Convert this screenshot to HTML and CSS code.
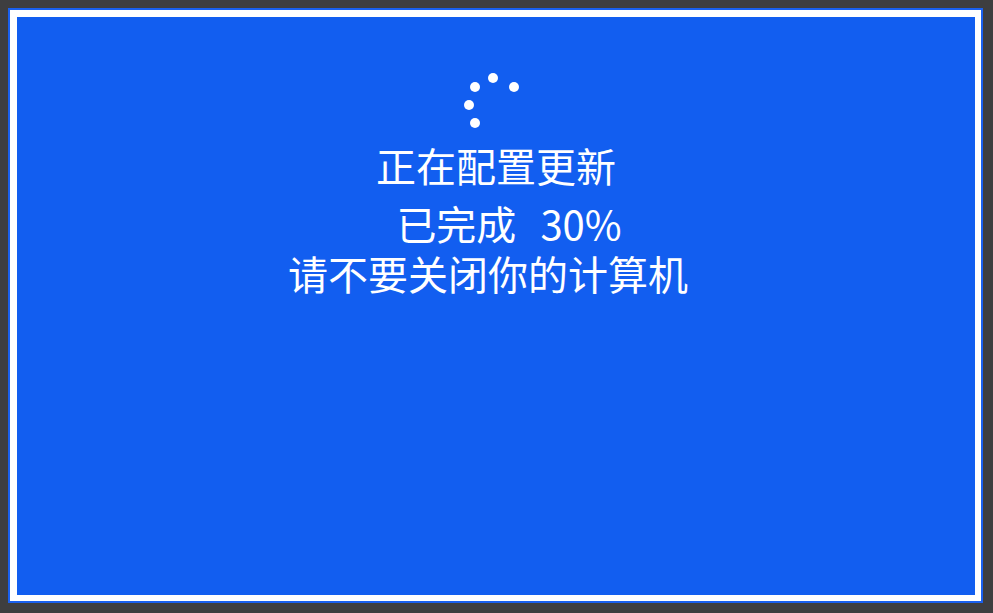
FILE: index.html
```html
<!DOCTYPE html>
<html lang="zh-CN">
  <head>
    <meta charset="UTF-8" />
    <meta name="viewport" content="width=device-width, initial-scale=1.0" />
    <title>正在配置更新</title>
    <link rel="stylesheet" href="styles.css">
  </head>
  <body>
    <div class="screen">
      <div class="panel">
        <!-- Loading dots -->
        <svg class="spinner" width="70" height="70" viewBox="0 0 70 70">
          <circle cx="32" cy="11" r="5" />
          <circle cx="53" cy="20" r="5" />
          <circle cx="14" cy="20" r="5" />
          <circle cx="8" cy="38" r="5" />
          <circle cx="14" cy="56" r="5" />
        </svg>

        <div class="message">
          <p class="title">正在配置更新</p>
          <p class="progress"><span>已完成</span><span class="percent">30%</span></p>
          <p class="warning">请不要关闭你的计算机</p>
        </div>
      </div>
    </div>
  </body>
</html>
```

FILE: styles.css
```css
html,
body {
  height: 100%;
}

body {
  margin: 0;
  padding: 8px 10px 10px 8px;
  box-sizing: border-box;
  background-color: #3e3e40;
  font-family: "Noto Sans CJK SC", "Noto Sans", sans-serif;
}

.screen {
  height: 100%;
  box-sizing: border-box;
  display: flex;
  border: 2px solid #1a60ee;
  padding: 7px 6px 6px 7px;
  background-color: #ffffff;
}

.panel {
  flex: 1;
  display: flex;
  flex-direction: column;
  align-items: center;
  padding-top: 50px;
  background-color: #125ef0;
  color: white;
}

.spinner {
  display: block;
  fill: white;
}

.message {
  margin-top: 3px;
  text-align: center;
  font-size: 40px;
  line-height: 50px;
}

.message p {
  margin: 0;
}

.message .progress {
  margin-top: 8px;
  padding-left: 26px;
}

.progress span {
  display: inline-block;
}

.percent {
  margin-left: 24px;
}

.warning {
  padding-right: 16px;
}
```
